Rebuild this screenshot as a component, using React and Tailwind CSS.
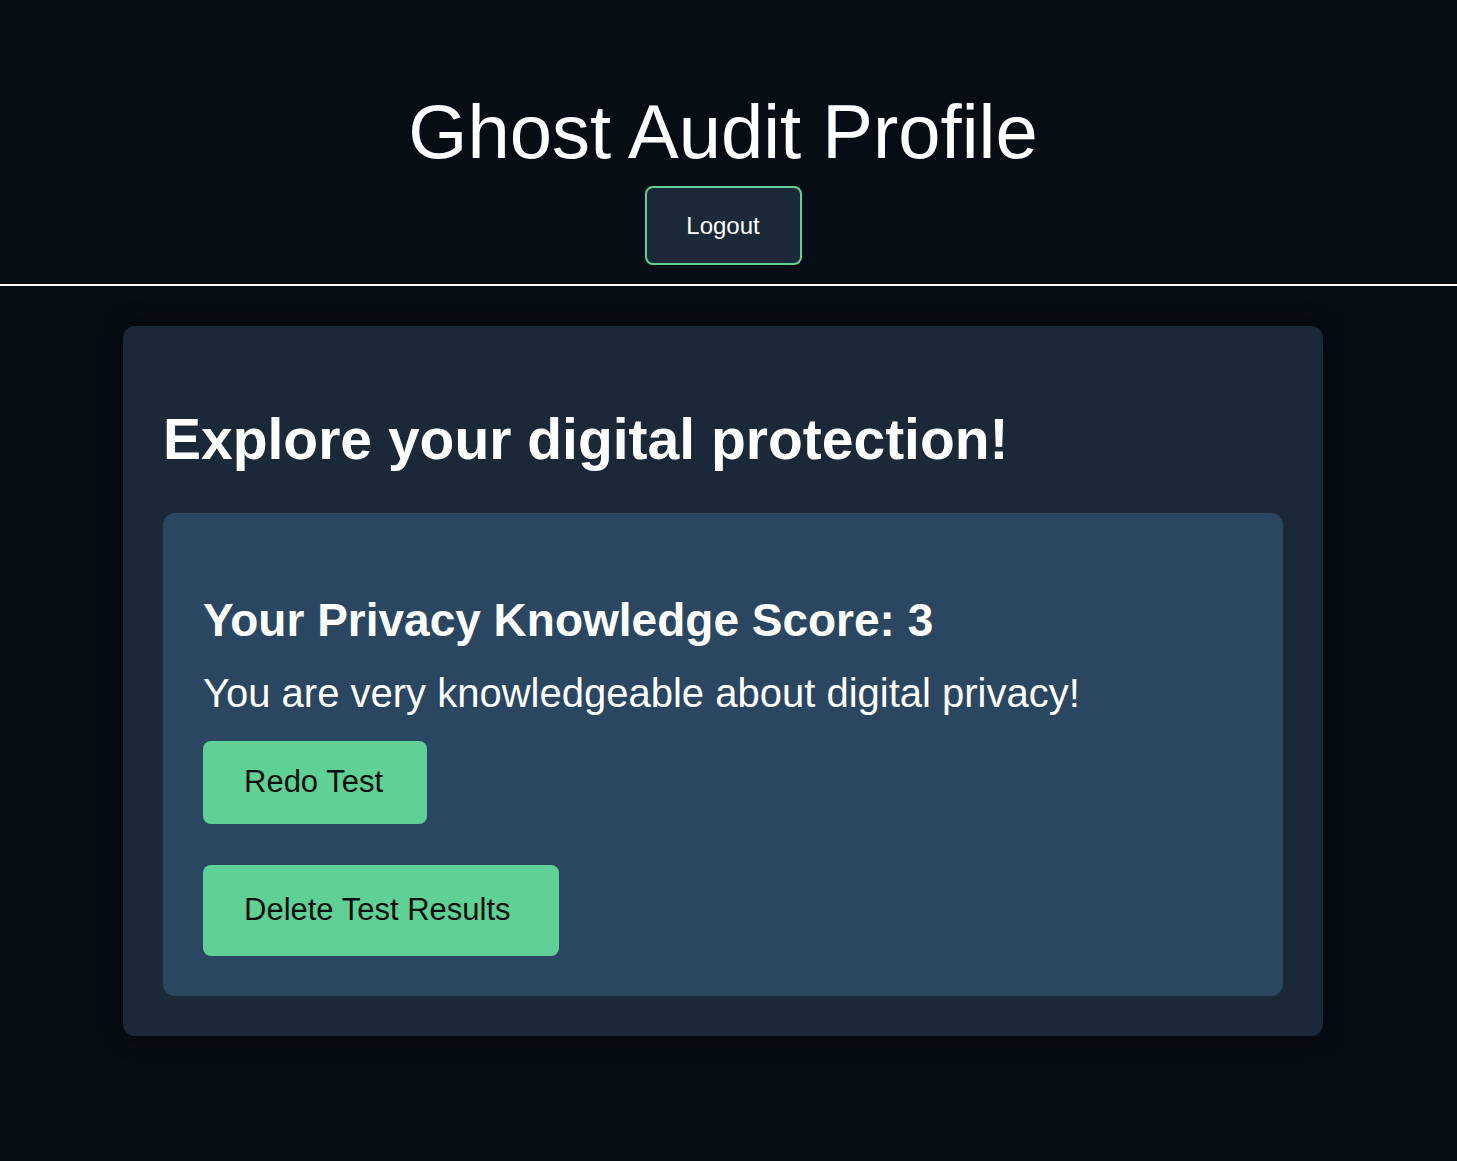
export default function App() {
  return (
    <div
      className="min-h-[1161px] w-full bg-[#070d14] text-white"
      style={{ fontFamily: '"Liberation Sans", Arial, Helvetica, sans-serif' }}
    >
      <header className="flex flex-col items-center pt-[88px] pr-[11px]">
        <h1 className="text-[76px] leading-[1.15] font-normal text-white">Ghost Audit Profile</h1>
        <button className="mt-[11px] flex h-[79px] w-[157px] items-center justify-center rounded-lg border-2 border-[#5fd096] bg-[#1a2838] text-[24px] text-white">
          Logout
        </button>
      </header>
      <div className="mt-[19px] h-[2px] w-full bg-white" />
      <main className="flex justify-center pt-[40px] pr-[11px] pb-[126px]">
        <section className="w-[1200px] rounded-xl bg-[#1a2838] px-[40px] pt-[81px] pb-[40px] shadow-[0_0_24px_rgba(0,0,0,0.45)]">
          <h2 className="text-[57px] leading-[1.15] font-bold text-white">Explore your digital protection!</h2>
          <div className="mt-[40px] rounded-xl bg-[#2b4660] px-[40px] pt-[81px] pb-[40px]">
            <h3 className="text-[46px] leading-[1.15] font-bold text-white">Your Privacy Knowledge Score: 3</h3>
            <p className="mt-[23px] text-[40px] leading-[1.15] text-white">
              You are very knowledgeable about digital privacy!
            </p>
            <div className="mt-[25px] flex flex-col items-start gap-[41px]">
              <button className="flex h-[83px] w-[224px] items-center rounded-lg bg-[#5fd096] pl-[41px] text-[31px] text-[#0b0f0d]">
                Redo Test
              </button>
              <button className="flex h-[91px] w-[356px] items-center rounded-lg bg-[#5fd096] pl-[41px] text-[31px] text-[#0b0f0d]">
                Delete Test Results
              </button>
            </div>
          </div>
        </section>
      </main>
    </div>
  );
}
